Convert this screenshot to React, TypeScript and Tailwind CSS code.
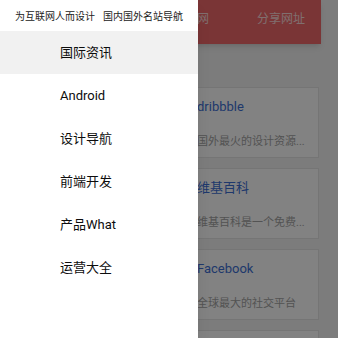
import React from 'react';

const font = { fontFamily: 'Roboto, "Noto Sans CJK SC", sans-serif' };

const sites = [
  { title: 'dribbble', desc: '国外最火的设计资源...' },
  { title: '维基百科', desc: '维基百科是一个免费...' },
  { title: 'Facebook', desc: '全球最大的社交平台' },
  { title: '', desc: '' },
];

const menu = ['国际资讯', 'Android', '设计导航', '前端开发', '产品What', '运营大全'];

const SiteCard: React.FC<{ title: string; desc: string }> = ({ title, desc }) => (
  <div className="h-[71px] shrink-0 bg-white border border-[#e6e6e6] pl-[178px] flex flex-col">
    {title && <div className="mt-[10px] text-[13px] leading-[18px] text-[#3d6fd4] whitespace-nowrap">{title}</div>}
    {desc && <div className="mt-[18px] text-[11px] leading-[15px] text-[#a3a3a3] whitespace-nowrap">{desc}</div>}
  </div>
);

export default function App() {
  return (
    <div className="relative w-[338px] h-[338px] overflow-hidden bg-[#f3f3f3]" style={font}>
      {/* page behind the drawer */}
      <div className="flex flex-col">
        <div className="h-[44px] mr-[17px] bg-[#ef686a] shadow-md flex items-center justify-end gap-[48px] pr-4 pb-[7px] text-[12px] text-white/75">
          <span>站网</span>
          <span>分享网址</span>
        </div>
        <div className="mt-[43px] ml-[18px] mr-[19px] flex flex-col gap-[10px]">
          {sites.map((s, i) => (
            <SiteCard key={i} title={s.title} desc={s.desc} />
          ))}
        </div>
      </div>

      {/* dim overlay */}
      <div className="absolute inset-0 bg-black/[0.49]" />

      {/* drawer */}
      <div className="absolute left-0 top-0 bottom-0 w-[198px] bg-white shadow-lg flex flex-col">
        <div className="h-[31px] pt-[11px] pl-[15px] text-[10px] leading-[12px] text-[#222] whitespace-nowrap">
          为互联网人而设计<span className="ml-2">国内国外名站导航</span>
        </div>
        {menu.map((m, i) => (
          <div
            key={m}
            className={`h-[43px] flex items-center pl-[60px] text-[13px] text-[#0d0d0d] ${i === 0 ? 'bg-[#f1f1f1]' : ''}`}
          >
            {m}
          </div>
        ))}
      </div>
    </div>
  );
}
